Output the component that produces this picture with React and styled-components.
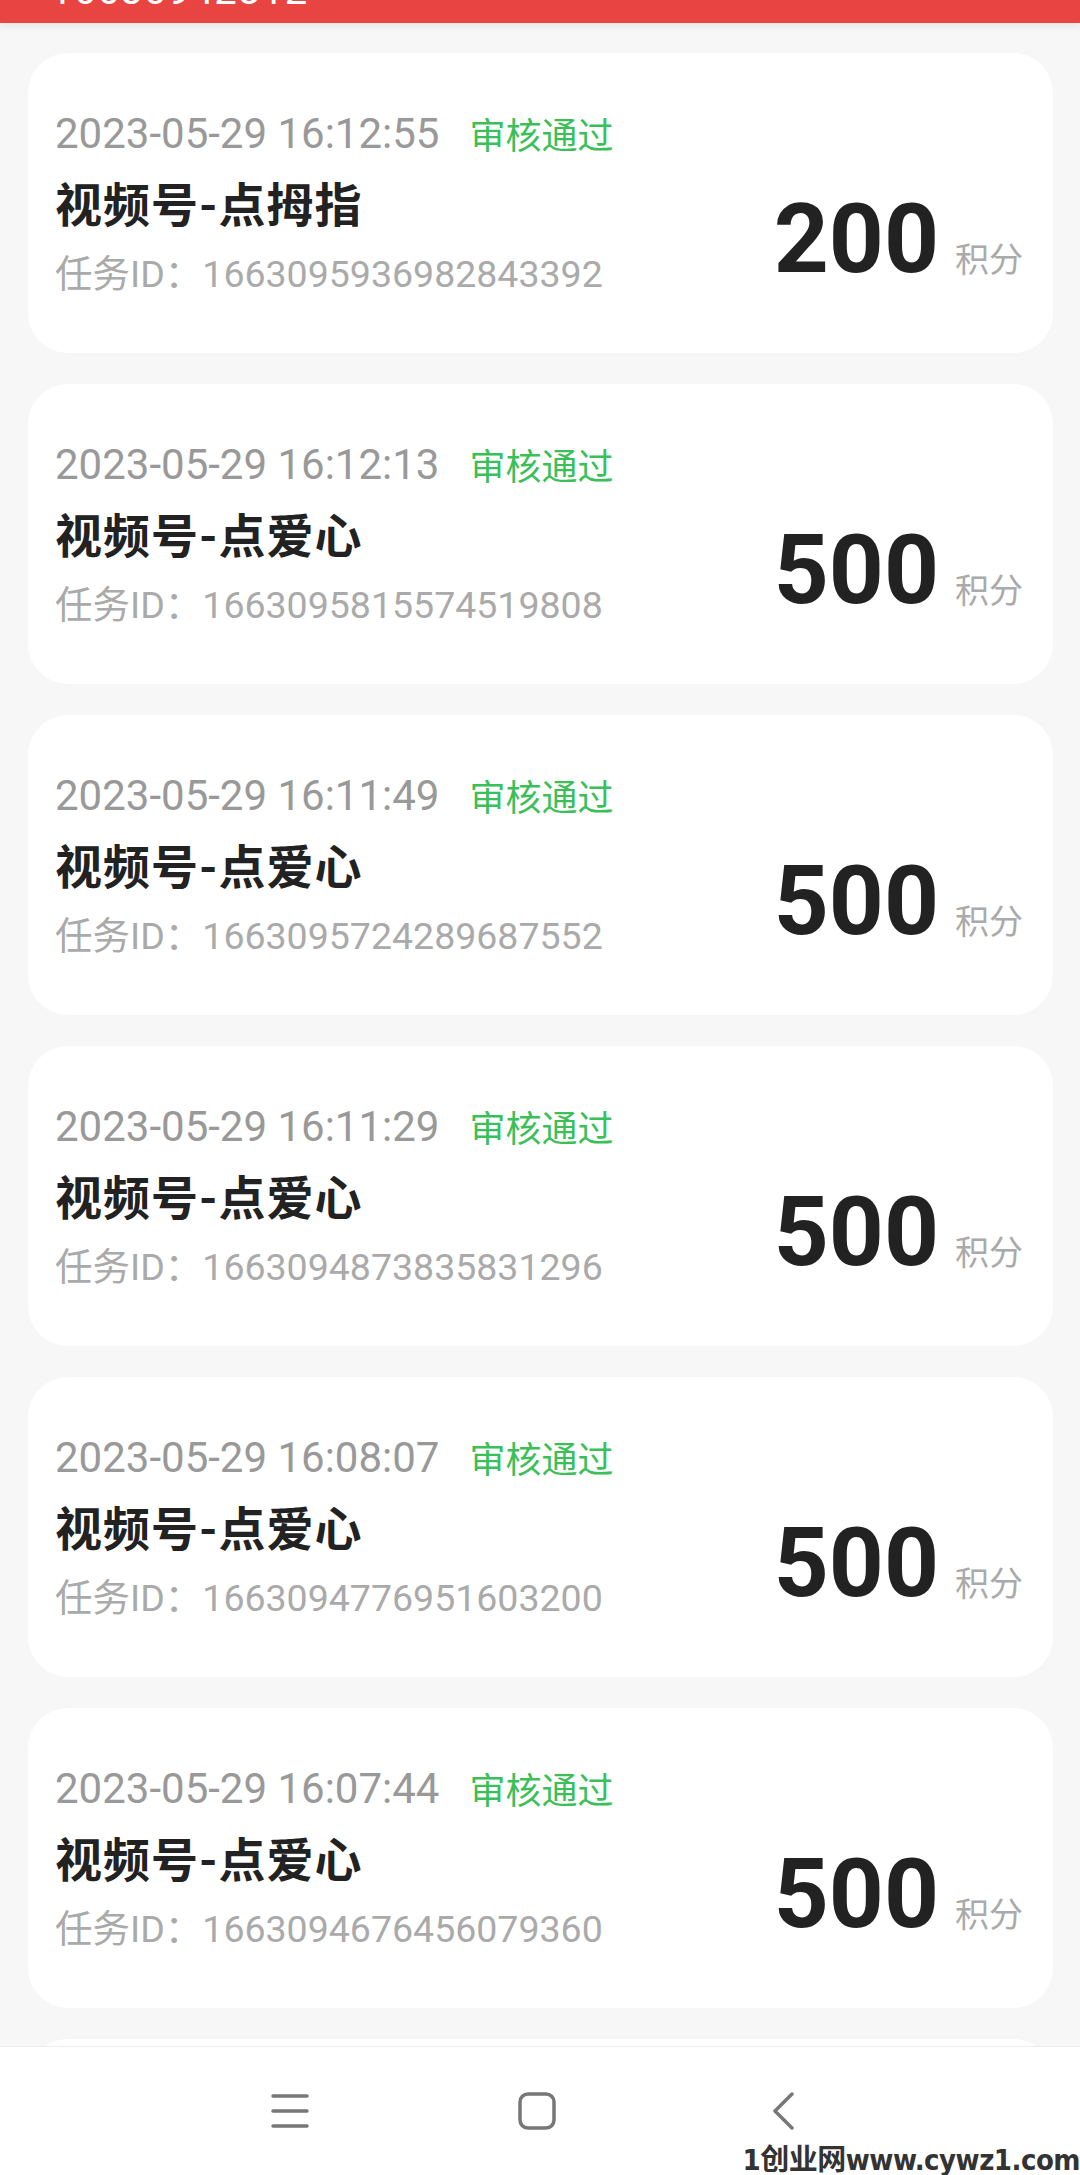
import styled, { createGlobalStyle } from 'styled-components';

const records = [
  { time: '2023-05-29 16:12:55', title: '视频号-点拇指', id: '1663095936982843392', points: 200 },
  { time: '2023-05-29 16:12:13', title: '视频号-点爱心', id: '1663095815574519808', points: 500 },
  { time: '2023-05-29 16:11:49', title: '视频号-点爱心', id: '1663095724289687552', points: 500 },
  { time: '2023-05-29 16:11:29', title: '视频号-点爱心', id: '1663094873835831296', points: 500 },
  { time: '2023-05-29 16:08:07', title: '视频号-点爱心', id: '1663094776951603200', points: 500 },
  { time: '2023-05-29 16:07:44', title: '视频号-点爱心', id: '1663094676456079360', points: 500 },
  { time: '2023-05-29 16:07:12', title: '视频号-点爱心', id: '1663094539208466432', points: 500 },
];

function App() {
  return (
    <>
      <GlobalStyle />
      <Page>
        <Header>
          <HeaderTitle>16630942812</HeaderTitle>
        </Header>
        <List>
          {records.map((r) => (
            <Card key={r.id}>
              <Info>
                <MetaRow>
                  <Time>{r.time}</Time>
                  <Status>审核通过</Status>
                </MetaRow>
                <Title>{r.title}</Title>
                <TaskId>任务ID：{r.id}</TaskId>
              </Info>
              <Reward>
                <Amount>{r.points}</Amount>
                <Unit>积分</Unit>
              </Reward>
            </Card>
          ))}
        </List>
        <NavBar>
          <NavButton>
            <svg width="38" height="36" viewBox="0 0 38 36">
              <g stroke="#777" strokeWidth="3.5" strokeLinecap="round">
                <line x1="2" y1="3" x2="36" y2="3" />
                <line x1="2" y1="18" x2="36" y2="18" />
                <line x1="2" y1="33" x2="36" y2="33" />
              </g>
            </svg>
          </NavButton>
          <NavButton>
            <svg width="38" height="38" viewBox="0 0 38 38">
              <rect x="2" y="2" width="34" height="34" rx="8" fill="none" stroke="#777" strokeWidth="3.5" />
            </svg>
          </NavButton>
          <NavButton>
            <svg width="24" height="38" viewBox="0 0 24 38">
              <polyline points="20,2 3,19 20,36" fill="none" stroke="#777" strokeWidth="3.5" strokeLinecap="round" strokeLinejoin="round" />
            </svg>
          </NavButton>
          <Watermark>1创业网www.cywz1.com</Watermark>
        </NavBar>
      </Page>
    </>
  );
}

const GlobalStyle = createGlobalStyle`
  html, body {
    margin: 0;
    padding: 0;
    background: #f7f7f7;
  }
  * {
    box-sizing: border-box;
  }
`;

const Page = styled.div`
  height: 100vh;
  display: flex;
  flex-direction: column;
  background: #f7f7f7;
  font-family: Roboto, 'Noto Sans CJK SC', sans-serif;
  overflow: hidden;
`;

const Header = styled.header`
  position: relative;
  z-index: 1;
  flex: 0 0 23px;
  background: #e84442;
  overflow: hidden;
  padding-left: 50px;
  box-shadow: 0 3px 8px rgba(0, 0, 0, 0.08);
`;

const HeaderTitle = styled.div`
  color: #fff;
  font-size: 40px;
  line-height: 40px;
  margin-top: -29px;
  letter-spacing: 1px;
`;

const List = styled.main`
  flex: 1;
  overflow: hidden;
  display: flex;
  flex-direction: column;
  gap: 31px;
  padding: 30px 27px 0 28px;
`;

const Card = styled.section`
  flex: 0 0 300px;
  display: flex;
  justify-content: space-between;
  background: #fff;
  border-radius: 40px;
  padding: 0 30px 0 27px;
`;

const Info = styled.div`
  display: flex;
  flex-direction: column;
  justify-content: center;
`;

const MetaRow = styled.div`
  display: flex;
  align-items: center;
  gap: 30px;
  height: 50px;
`;

const Time = styled.span`
  font-size: 42px;
  color: #999;
`;

const Status = styled.span`
  font-size: 36px;
  color: #3bbf59;
`;

const Title = styled.div`
  margin-top: 20px;
  font-size: 47px;
  line-height: 56px;
  font-weight: 700;
  color: #222;
  letter-spacing: 1px;
`;

const TaskId = styled.div`
  margin-top: 16px;
  font-size: 37.5px;
  line-height: 48px;
  color: #aaa;
`;

const Reward = styled.div`
  align-self: flex-end;
  display: flex;
  align-items: baseline;
  gap: 16px;
  padding-bottom: 66px;
`;

const Amount = styled.span`
  font-size: 96px;
  line-height: 96px;
  font-weight: 700;
  color: #222;
`;

const Unit = styled.span`
  font-size: 34px;
  color: #aaa;
`;

const NavBar = styled.nav`
  position: relative;
  flex: 0 0 129px;
  display: flex;
  justify-content: center;
  align-items: center;
  gap: 207px;
  padding: 0 7px 0 0;
  background: #fff;
  border-top: 1px solid #ededed;
`;

const NavButton = styled.div`
  width: 40px;
  display: flex;
  justify-content: center;
`;

const Watermark = styled.div`
  position: absolute;
  right: 0;
  bottom: 0;
  line-height: 30px;
  font-family: 'DejaVu Sans Condensed', 'Noto Sans CJK SC', sans-serif;
  font-weight: 700;
  font-size: 29px;
  color: #333;
  letter-spacing: -0.5px;
`;

export default App;
